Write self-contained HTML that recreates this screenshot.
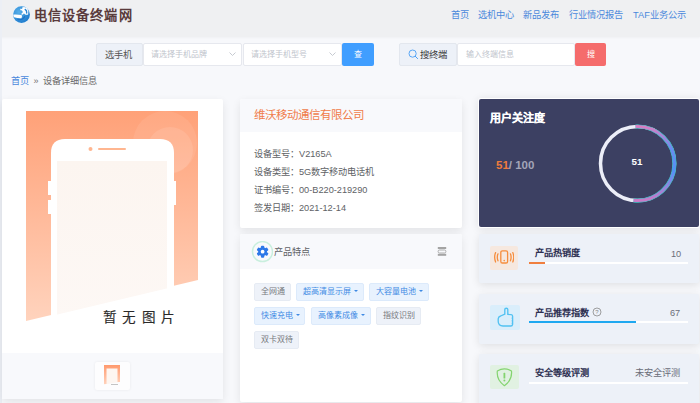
<!DOCTYPE html>
<html lang="zh-CN"><head><meta charset="utf-8">
<style>
*{margin:0;padding:0;box-sizing:border-box}
html,body{width:700px;height:403px;overflow:hidden}
body{font-family:"Liberation Sans",sans-serif;background:#f7f8fb;position:relative;color:#606266}
.abs{position:absolute}
#hdr{left:0;top:0;width:700px;height:37px;background:#eff0f2;box-shadow:0 1px 2px rgba(0,0,0,.03)}
#strip{left:0;top:0;width:2px;height:403px;background:#eceff5}
.logo-t{left:34px;top:8px;font-size:13.2px;letter-spacing:1.1px;font-weight:bold;color:#5a3b3c;line-height:16px;white-space:nowrap}
.nav{top:9px;font-size:9.25px;line-height:12px;color:#4a88dc;white-space:nowrap}
.box{border:1px solid #e3e7ee;border-radius:2px}
.sel{background:#fff;border:1px solid #e6e8ee;border-radius:2px}
.ph{font-size:8px;line-height:10px;color:#c0c4cc;white-space:nowrap}
.card{background:#fff;box-shadow:0 3px 8px rgba(0,0,0,.085);border-radius:2px}
.rc{background:#edf1f8;box-shadow:0 2px 8px rgba(0,0,0,.1);border-radius:2px}
.tag{position:absolute;height:18px;border-radius:2px;font-size:8px;line-height:16px;padding-left:6px;white-space:nowrap}
.tg{background:#eef2f9;border:1px solid #e6ebf3;color:#77797e}
.tb{background:#e8f2fe;border:1px solid #dceafb;color:#3f8ae4}
.car{display:inline-block;width:0;height:0;border-left:2.2px solid transparent;border-right:2.2px solid transparent;border-top:2.5px solid #3f8ae4;vertical-align:middle;margin-left:3px;position:relative;top:-1px}
.info{left:254px;font-size:9.2px;line-height:12px;color:#606266;white-space:nowrap}
.rt{font-size:9.2px;font-weight:600;color:#2e3052;line-height:12px;white-space:nowrap}
.rv{font-size:9.2px;color:#6a6d78;line-height:12px;white-space:nowrap}
</style></head><body>
<div id="hdr" class="abs"></div>
<div id="strip" class="abs"></div>

<!-- logo -->
<svg class="abs" style="left:12px;top:5px" width="20" height="20" viewBox="0 0 20 20">
  <defs><radialGradient id="lg" cx="35%" cy="35%" r="70%"><stop offset="0" stop-color="#58b0ea"/><stop offset="1" stop-color="#1f7ccd"/></radialGradient></defs>
  <circle cx="9.5" cy="9.6" r="8.9" fill="#e8f2fa"/>
  <circle cx="9.5" cy="9.6" r="8.4" fill="url(#lg)"/>
  <path d="M1.1 9.6 Q6 9.4 9.6 9.9 Q10.6 11.6 9.3 13.4 Q5 13.3 2 12.3 Z" fill="#fff"/>
  <path d="M10.2 2.4 Q13 1.4 15.4 3.6 Q17.2 6.5 16.2 9.4 Q14.6 10.2 13.1 9.6 Q11 7.8 10.2 5.3 Z" fill="#fff"/>
  <path d="M13.2 4.4 Q15 5.6 14.7 8" fill="none" stroke="#2a86d4" stroke-width="1.4" stroke-linecap="round"/>
  <path d="M8.3 4.6 Q11.2 4.4 11.6 6.6 Q11.6 8.6 9.6 9.2" fill="none" stroke="#fff" stroke-width="1.5"/>
  <path d="M5.5 14.2 Q10.8 15.6 12.8 11.2" fill="none" stroke="#1f74c6" stroke-width="1.4"/>
</svg>
<div class="abs logo-t">电信设备终端网</div>

<div class="abs nav" style="left:451px">首页</div>
<div class="abs nav" style="left:478px">选机中心</div>
<div class="abs nav" style="left:523px">新品发布</div>
<div class="abs nav" style="left:569px">行业情况报告</div>
<div class="abs nav" style="left:633px">TAF业务公示</div>

<!-- search row -->
<div class="abs box" style="left:96px;top:43px;width:47px;height:23px;background:#edf1f8"></div>
<div class="abs" style="left:105px;top:49px;font-size:9.3px;line-height:12px;color:#555">选手机</div>
<div class="abs sel" style="left:143px;top:43px;width:99px;height:23px"></div>
<div class="abs ph" style="left:151px;top:50px">请选择手机品牌</div>
<svg class="abs" style="left:229px;top:52px" width="7" height="5"><path d="M0.5 0.5 L3.5 3.5 L6.5 0.5" fill="none" stroke="#c0c4cc" stroke-width="0.9"/></svg>
<div class="abs sel" style="left:243px;top:43px;width:99px;height:23px"></div>
<div class="abs ph" style="left:251px;top:50px">请选择手机型号</div>
<svg class="abs" style="left:329px;top:52px" width="7" height="5"><path d="M0.5 0.5 L3.5 3.5 L6.5 0.5" fill="none" stroke="#c0c4cc" stroke-width="0.9"/></svg>
<div class="abs" style="left:342px;top:43px;width:32px;height:23px;background:#409eff;border-radius:2px;color:#fff;font-size:8px;line-height:23px;text-align:center">查</div>

<div class="abs box" style="left:399px;top:43px;width:58px;height:23px;background:#edf1f8"></div>
<svg class="abs" style="left:408px;top:49px" width="11" height="11" viewBox="0 0 11 11"><circle cx="4.6" cy="4.6" r="3.6" fill="none" stroke="#4a9ef5" stroke-width="0.9"/><path d="M7.2 7.2 L9.6 9.6" stroke="#4a9ef5" stroke-width="1" stroke-linecap="round"/></svg>
<div class="abs" style="left:420px;top:49px;font-size:9.4px;line-height:12px;color:#3a3a3a">搜终端</div>
<div class="abs sel" style="left:457px;top:43px;width:118px;height:23px"></div>
<div class="abs ph" style="left:466px;top:50px">输入终端信息</div>
<div class="abs" style="left:575px;top:43px;width:31px;height:23px;background:#f56c6c;border-radius:2px;color:#fff;font-size:8px;line-height:23px;text-align:center">搜</div>

<!-- breadcrumb -->
<div class="abs" style="left:11px;top:74.7px;font-size:9.2px;line-height:12px;color:#4a88dc">首页</div>
<div class="abs" style="left:33.5px;top:74.5px;font-size:9px;line-height:12px;color:#707070">»</div>
<div class="abs" style="left:43px;top:74.7px;font-size:9.2px;line-height:12px;color:#6a6a6a">设备详细信息</div>

<!-- left card -->
<div class="abs card" style="left:2px;top:99px;width:221px;height:300px"></div>
<div class="abs" style="left:2px;top:353px;width:221px;height:46px;background:#f8f9fc"></div>
<svg class="abs" style="left:26px;top:111px" width="172" height="211" viewBox="0 0 172 211">
  <defs>
    <linearGradient id="og" x1="0" y1="0" x2="0" y2="1"><stop offset="0" stop-color="#ffa178"/><stop offset="1" stop-color="#ffd3bd"/></linearGradient>
    <linearGradient id="sg" x1="0" y1="0" x2="0" y2="1"><stop offset="0" stop-color="#fcf5f0"/><stop offset="1" stop-color="#fdf8f5"/></linearGradient>
  </defs>
  <path d="M0 0 H172 V169 L0 210 Z" fill="url(#og)"/>
  <circle cx="139" cy="32" r="32" fill="#fff" opacity="0.08"/>
  <circle cx="144" cy="39" r="23" fill="#fff" opacity="0.1"/>
  <!-- phone -->
  <path d="M25 211 V42 Q25 28 39 28 H134 Q148 28 148 42 V211 Z" fill="#fff"/>
  <rect x="22" y="70" width="3" height="14" fill="#fff"/>
  <rect x="22" y="89" width="3" height="14" fill="#fff"/>
  <rect x="148" y="70" width="2" height="24" fill="#fff"/>
  <circle cx="64.5" cy="38" r="2" fill="#ffb690"/>
  <rect x="72" y="37" width="28" height="2" rx="1" fill="#ffb690"/>
  <rect x="31" y="50" width="110" height="161" fill="url(#sg)"/>
  <path d="M0 211 L172 170 V211 Z" fill="#fff"/>
</svg>
<div class="abs" style="left:103px;top:309.5px;font-size:13.6px;line-height:16px;color:#2a2a2a;letter-spacing:5.4px;white-space:nowrap;-webkit-text-stroke:0.15px #2a2a2a">暂无图片</div>
<div class="abs" style="left:95px;top:362px;width:35px;height:28px;background:#fdfdfe;border-radius:2px;box-shadow:0 0 3px rgba(0,0,0,.07)"></div>
<svg class="abs" style="left:104px;top:365px" width="16" height="21" viewBox="0 0 16 21">
  <defs><linearGradient id="tg" x1="0" y1="0" x2="0" y2="1"><stop offset="0" stop-color="#ff9a6e"/><stop offset="1" stop-color="#ffd3bd"/></linearGradient></defs>
  <path d="M0 0 H16 V17 L0 19.5 Z" fill="url(#tg)"/>
  <rect x="2.5" y="3.5" width="11" height="17" fill="#fdf6f1"/>
  <path d="M0 19.5 L16 17 V21 H0 Z" fill="#fdfdfe"/>
  <rect x="7" y="19" width="7" height="1" fill="#c4c4c4"/>
</svg>

<!-- middle card 1 -->
<div class="abs card" style="left:240px;top:99px;width:222px;height:129px"></div>
<div class="abs" style="left:240px;top:99px;width:222px;height:33px;background:#f8f9fc;border-radius:2px 2px 0 0"></div>
<div class="abs" style="left:254px;top:109px;font-size:11.5px;line-height:13px;color:#f07c4a;white-space:nowrap">维沃移动通信有限公司</div>
<div class="abs info" style="top:148px">设备型号：V2165A</div>
<div class="abs info" style="top:166px">设备类型：5G数字移动电话机</div>
<div class="abs info" style="top:184px">证书编号：00-B220-219290</div>
<div class="abs info" style="top:202px">签发日期：2021-12-14</div>

<!-- middle card 2 -->
<div class="abs card" style="left:240px;top:234px;width:222px;height:168px"></div>
<div class="abs" style="left:240px;top:234px;width:222px;height:35px;background:#f8f9fc;border-radius:2px 2px 0 0"></div>
<svg class="abs" style="left:251px;top:241px" width="22" height="22" viewBox="0 0 22 22">
  <circle cx="11.5" cy="10.6" r="10" fill="none" stroke="#c9efde" stroke-width="1.5"/>
  <g transform="translate(11.6 10.7) scale(1.05)" fill="#2c78e8">
    <circle r="4.2"/>
    <rect x="-1.6" y="-5.7" width="3.2" height="11.4" rx="1"/>
    <rect x="-1.6" y="-5.7" width="3.2" height="11.4" rx="1" transform="rotate(60)"/>
    <rect x="-1.6" y="-5.7" width="3.2" height="11.4" rx="1" transform="rotate(120)"/>
    <circle r="1.8" fill="#fff"/>
  </g>
</svg>
<div class="abs" style="left:274px;top:246px;font-size:9.2px;line-height:12px;color:#606266">产品特点</div>
<svg class="abs" style="left:437px;top:246px" width="10" height="11" viewBox="0 0 10 11">
  <rect x="0.8" y="1" width="8.4" height="2" fill="#a4a4a4"/>
  <rect x="1.1" y="4" width="7.8" height="3" rx="1.4" fill="none" stroke="#a4a4a4" stroke-width="0.9"/>
  <rect x="0.8" y="7.8" width="8.4" height="2" fill="#a4a4a4"/>
</svg>

<div class="tag tg" style="left:254px;top:283px;width:37px">全网通</div>
<div class="tag tb" style="left:296px;top:283px;width:68px">超高清显示屏<span class="car"></span></div>
<div class="tag tb" style="left:369px;top:283px;width:60px">大容量电池<span class="car"></span></div>
<div class="tag tb" style="left:254px;top:307px;width:51px">快速充电<span class="car"></span></div>
<div class="tag tb" style="left:311px;top:307px;width:60px">高像素成像<span class="car"></span></div>
<div class="tag tg" style="left:376px;top:307px;width:45px">指纹识别</div>
<div class="tag tg" style="left:254px;top:331px;width:45px">双卡双待</div>

<!-- dark card -->
<div class="abs" style="left:478px;top:98px;width:222px;height:130px;background:#fff;border-radius:3px;box-shadow:0 1px 8px rgba(0,0,0,.1)"></div>
<div class="abs" style="left:479px;top:99px;width:220px;height:128px;background:#3c4062;border-radius:2px"></div>
<div class="abs" style="left:490px;top:112px;font-size:11px;font-weight:bold;line-height:13px;color:#fff;white-space:nowrap;-webkit-text-stroke:0.2px #fff">用户关注度</div>
<div class="abs" style="left:496px;top:159px;font-size:11.5px;font-weight:bold;line-height:13px;white-space:nowrap"><span style="color:#ee7b3d">51</span><span style="color:#a3a5b8">/ 100</span></div>
<svg class="abs" style="left:597px;top:123px" width="81" height="81" viewBox="0 0 81 81">
  <defs><linearGradient id="rg" x1="0" y1="0" x2="0" y2="1"><stop offset="0" stop-color="#d77ec3"/><stop offset="0.3" stop-color="#6b8cf2"/><stop offset="0.6" stop-color="#5490f8"/><stop offset="1" stop-color="#c97bc7"/></linearGradient></defs>
  <circle cx="40.5" cy="40.5" r="37" fill="none" stroke="#eceef8" stroke-width="3.5"/>
  <path d="M38.6 3.55 A37 37 0 1 1 36.6 77.3" fill="none" stroke="#33b8bd" stroke-width="4.2"/>
  <path d="M38.6 3.55 A37 37 0 1 1 36.6 77.3" fill="none" stroke="url(#rg)" stroke-width="3"/>
</svg>
<div class="abs" style="left:627px;top:156px;width:20px;text-align:center;font-size:9.8px;font-weight:bold;line-height:12px;color:#fff">51</div>

<!-- right cards -->
<div class="abs rc" style="left:479px;top:234px;width:220px;height:49px"></div>
<div class="abs" style="left:490px;top:246px;width:28px;height:24px;background:#f6e8df;border-radius:2px"></div>
<svg class="abs" style="left:494px;top:249px" width="20" height="18" viewBox="0 0 20 18">
  <g fill="none" stroke="#f68d3d" stroke-width="1.3" stroke-linecap="round">
    <rect x="6.8" y="1.8" width="6.8" height="12.2" rx="1.6"/>
    <path d="M4 4.8 Q2.6 8.2 4 11.8"/><path d="M1.6 3.6 Q-0.3 8.2 1.6 13"/>
    <path d="M16.4 4.8 Q17.8 8.2 16.4 11.8"/><path d="M18.8 3.6 Q20.7 8.2 18.8 13"/>
  </g>
  <circle cx="10.2" cy="11.6" r="0.8" fill="#f68d3d"/>
</svg>
<div class="abs rt" style="left:535px;top:247px">产品热销度</div>
<div class="abs rv" style="left:671px;top:247.5px">10</div>
<div class="abs" style="left:529px;top:262px;width:159px;height:2px;background:#fff"></div>
<div class="abs" style="left:529px;top:262px;width:16px;height:2px;background:#f07f3f"></div>

<div class="abs rc" style="left:479px;top:294px;width:220px;height:50px"></div>
<div class="abs" style="left:490px;top:305px;width:30px;height:25px;background:#daeefb;border-radius:2px"></div>
<svg class="abs" style="left:496px;top:306px" width="19" height="23" viewBox="0 0 19 23">
  <path d="M8.8 8.2 L8.8 3.6 Q8.8 2.2 10.3 2.2 Q11.8 2.2 11.8 3.6 L11.8 8.4 L15.2 8.6 Q16.7 8.8 16.6 10.4 L16.6 18.4 Q16.4 20 14.8 20 L7 20 Q2.2 19.6 2.2 15.2 L2.2 12.8 Q2.4 10.6 4.6 10 Z" fill="none" stroke="#52c2f2" stroke-width="1.35" stroke-linejoin="round"/>
  <path d="M16.6 12.2 H15.6 M16.6 14.8 H15.6 M16.6 17.3 H15.6" stroke="#52c2f2" stroke-width="0.8"/>
</svg>
<div class="abs rt" style="left:535px;top:307px">产品推荐指数</div>
<svg class="abs" style="left:592px;top:307px" width="10" height="10" viewBox="0 0 10 10"><circle cx="5" cy="5" r="4" fill="none" stroke="#888" stroke-width="0.8"/><text x="5" y="7.3" font-size="6" text-anchor="middle" fill="#888" font-family="Liberation Sans">?</text></svg>
<div class="abs rv" style="left:670px;top:307px">67</div>
<div class="abs" style="left:529px;top:321px;width:159px;height:2px;background:#fff"></div>
<div class="abs" style="left:529px;top:321px;width:107px;height:2px;background:#1fa8f0"></div>

<div class="abs rc" style="left:479px;top:354px;width:220px;height:60px"></div>
<div class="abs" style="left:490px;top:365px;width:29px;height:24px;background:#e1f1e2;border-radius:2px"></div>
<svg class="abs" style="left:496px;top:367px" width="17" height="20" viewBox="0 0 17 20">
  <path d="M1.3 4 Q8.3 -0.4 15.5 4 Q16.4 13.2 8.4 18.7 Q0.4 13.2 1.3 4 Z" fill="none" stroke="#84d46f" stroke-width="1.2" stroke-linejoin="round"/>
  <rect x="7.5" y="5.8" width="1.8" height="5.8" rx="0.6" fill="#84d46f"/>
  <circle cx="8.4" cy="13.5" r="1" fill="#84d46f"/>
</svg>
<div class="abs rt" style="left:535px;top:367px">安全等级评测</div>
<div class="abs rv" style="left:635px;top:367px">未安全评测</div>
<div class="abs" style="left:529px;top:382px;width:159px;height:2px;background:#fff"></div>

</body></html>
